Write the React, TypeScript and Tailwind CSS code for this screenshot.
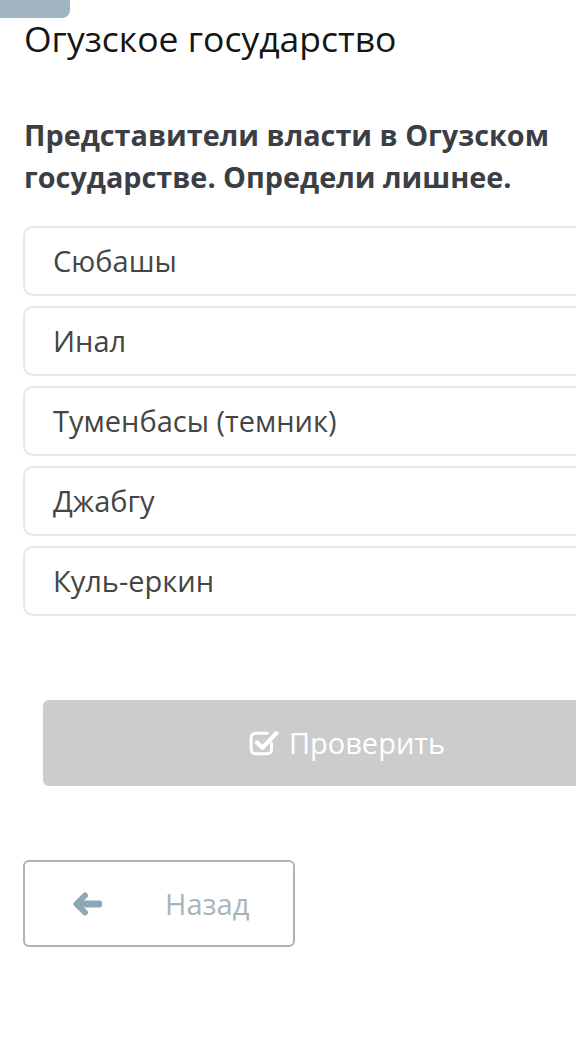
const options = ["Сюбашы", "Инал", "Туменбасы (темник)", "Джабгу", "Куль-еркин"]

function CheckSquare() {
  return (
    <svg viewBox="2 5 28 24" className="w-[30px] h-[26px]" fill="none">
      <path
        d="M23 17.5v5.5a4 4 0 0 1-4 4H8a4 4 0 0 1-4-4V12a4 4 0 0 1 4-4h11"
        stroke="currentColor"
        strokeWidth="2.8"
        strokeLinecap="round"
      />
      <path
        d="M9.5 16.5l5 5L27.5 8"
        stroke="currentColor"
        strokeWidth="4"
        strokeLinecap="round"
        strokeLinejoin="round"
      />
    </svg>
  )
}

function ArrowLeft() {
  return (
    <svg viewBox="0 0 30 24" className="w-[30px] h-[24px]" fill="none">
      <path d="M27 12H6" stroke="currentColor" strokeWidth="7" strokeLinecap="round" />
      <path
        d="M13 3.5L4.5 12l8.5 8.5"
        stroke="currentColor"
        strokeWidth="6"
        strokeLinecap="round"
        strokeLinejoin="round"
      />
    </svg>
  )
}

export default function App() {
  return (
    <div className="w-[576px] h-[1048px] overflow-hidden bg-white font-['Open_Sans',sans-serif]">
      <div className="w-[70px] h-[18px] rounded-br-[8px] bg-[#a1b4c1]" />
      <div className="w-[700px] pl-[24px]">
        <h1 className="text-[35.5px] leading-[42px] text-[#151515] -mt-[1px]">Огузское государство</h1>

        <p className="mt-[55px] text-[28.8px] leading-[42px] font-bold text-[#3b3f45] w-[552px]">
          Представители власти в Огузском государстве. Определи лишнее.
        </p>

        <div className="mt-[28px] flex flex-col gap-[10px] w-[650px] -ml-[1px]">
          {options.map((o) => (
            <div
              key={o}
              className="h-[70px] flex items-center pl-[28px] rounded-[10px] border-2 border-[#e6e7e8] text-[29px] text-[#454545]"
            >
              {o}
            </div>
          ))}
        </div>

        <div className="mt-[84px] ml-[19px] w-[608px] h-[86px] rounded-[6px] bg-[#cccccc] flex items-center justify-center gap-[10px] text-white text-[29px]">
          <CheckSquare />
          <span>Проверить</span>
        </div>

        <div className="mt-[74px] -ml-[1px] w-[272px] h-[87px] rounded-[6px] border-2 border-[#a9b4bb] flex items-center text-[29px] text-[#a6b5be]">
          <span className="ml-[47px] text-[#8ea6b6]">
            <ArrowLeft />
          </span>
          <span className="ml-[63px]">Назад</span>
        </div>
      </div>
    </div>
  )
}
